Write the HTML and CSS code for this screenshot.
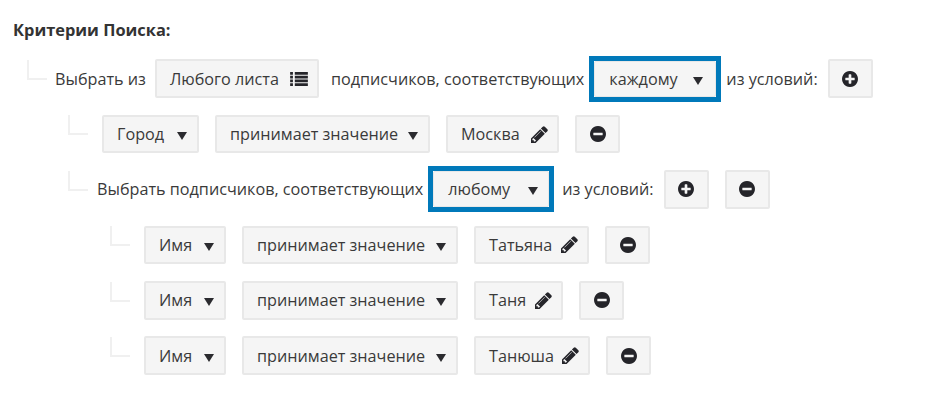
FILE: index.html
```html
<!DOCTYPE html>
<html lang="ru">
<head>
<meta charset="utf-8">
<title>Критерии Поиска</title>
<link rel="stylesheet" href="styles.css">
</head>
<body>
<svg class="defs" xmlns="http://www.w3.org/2000/svg">
  <symbol id="i-plus" viewBox="0 0 1536 1536"><path transform="translate(0 -128)" d="M1216 960v-128q0-26-19-45t-45-19h-256v-256q0-26-19-45t-45-19h-128q-26 0-45 19t-19 45v256h-256q-26 0-45 19t-19 45v128q0 26 19 45t45 19h256v256q0 26 19 45t45 19h128q26 0 45-19t19-45v-256h256q26 0 45-19t19-45zm320-64q0 209-103 385.5t-279.5 279.5-385.5 103-385.5-103-279.5-279.5-103-385.5 103-385.5 279.5-279.5 385.5-103 385.5 103 279.5 279.5 103 385.5z"/></symbol>
  <symbol id="i-minus" viewBox="0 0 1536 1536"><path transform="translate(0 -128)" d="M1216 960v-128q0-26-19-45t-45-19h-768q-26 0-45 19t-19 45v128q0 26 19 45t45 19h768q26 0 45-19t19-45zm320-64q0 209-103 385.5t-279.5 279.5-385.5 103-385.5-103-279.5-279.5-103-385.5 103-385.5 279.5-279.5 385.5-103 385.5 103 279.5 279.5 103 385.5z"/></symbol>
  <symbol id="i-pencil" viewBox="128 128 1536 1536"><path d="M491 1536l91-91-235-235-91 91v107h128v128h107zm523-928q0-22-22-22-10 0-17 7l-542 542q-7 7-7 17 0 22 22 22 10 0 17-7l542-542q7-7 7-17zm-54-192l416 416-832 832h-416v-416zm683 96q0 53-37 90l-166 166-416-416 166-165q36-38 90-38 53 0 91 38l235 234q37 39 37 91z"/></symbol>
  <symbol id="i-list" viewBox="0 0 19 15"><path d="M0 0h3v3H0zM5 0h14v3H5zM0 4h3v3H0zM5 4h14v3H5zM0 8h3v3H0zM5 8h14v3H5zM0 12h3v3H0zM5 12h14v3H5z"/></symbol>
</svg>

<main class="criteria">
  <h2 class="title">Критерии Поиска:</h2>

  <div class="row">
    <span class="elbow"></span>
    <span class="label">Выбрать из</span>
    <button class="btn btn-list">Любого листа <svg class="ico ico-list"><use href="#i-list"/></svg></button>
    <span class="label label-wide">подписчиков, соответствующих</span>
    <span class="hl"><button class="btn btn-each">каждому <i class="caret"></i></button></span>
    <span class="label label-tail">из условий:</span>
    <button class="btn btn-icon"><svg class="ico"><use href="#i-plus"/></svg></button>
  </div>

  <div class="group">
    <div class="row">
      <span class="elbow"></span>
      <button class="btn first btn-city">Город <i class="caret"></i></button>
      <button class="btn btn-op">принимает значение <i class="caret"></i></button>
      <button class="btn val val-moscow">Москва <svg class="ico ico-pen"><use href="#i-pencil"/></svg></button>
      <button class="btn btn-icon"><svg class="ico"><use href="#i-minus"/></svg></button>
    </div>

    <div class="row">
      <span class="elbow"></span>
      <span class="label label-nested">Выбрать подписчиков, соответствующих</span>
      <span class="hl"><button class="btn btn-any">любому <i class="caret"></i></button></span>
      <span class="label label-tail label-tail-any">из условий:</span>
      <button class="btn btn-icon"><svg class="ico"><use href="#i-plus"/></svg></button>
      <button class="btn btn-icon"><svg class="ico"><use href="#i-minus"/></svg></button>
    </div>

    <div class="group group-inner">
      <div class="row">
        <span class="elbow"></span>
        <button class="btn first btn-name">Имя <i class="caret"></i></button>
        <button class="btn btn-op">принимает значение <i class="caret"></i></button>
        <button class="btn val val-tatyana">Татьяна <svg class="ico ico-pen"><use href="#i-pencil"/></svg></button>
        <button class="btn btn-icon"><svg class="ico"><use href="#i-minus"/></svg></button>
      </div>
      <div class="row">
        <span class="elbow"></span>
        <button class="btn first btn-name">Имя <i class="caret"></i></button>
        <button class="btn btn-op">принимает значение <i class="caret"></i></button>
        <button class="btn val val-tanya">Таня <svg class="ico ico-pen"><use href="#i-pencil"/></svg></button>
        <button class="btn btn-icon"><svg class="ico"><use href="#i-minus"/></svg></button>
      </div>
      <div class="row">
        <span class="elbow"></span>
        <button class="btn first btn-name">Имя <i class="caret"></i></button>
        <button class="btn btn-op">принимает значение <i class="caret"></i></button>
        <button class="btn val val-tanyusha">Танюша <svg class="ico ico-pen"><use href="#i-pencil"/></svg></button>
        <button class="btn btn-icon"><svg class="ico"><use href="#i-minus"/></svg></button>
      </div>
    </div>
  </div>
</main>
</body>
</html>
```

FILE: styles.css
```css
* { box-sizing: border-box; }
html, body { margin: 0; padding: 0; background: #fff; }
body {
  width: 932px;
  height: 405px;
  overflow: hidden;
  font-family: "Open Sans", sans-serif;
  font-size: 16.2px;
  color: #3a3a3a;
}
.defs { display: none; }
.criteria { padding: 19px 0 0 13px; }
.title {
  margin: 0 0 18px;
  font-size: 16.4px;
  font-weight: 700;
  line-height: 22px;
  color: #333;
}
.group { padding-left: 41px; }
.group-inner { padding-left: 42px; }
.row {
  display: flex;
  align-items: center;
  height: 39.4px;
  margin-left: 14px;
  margin-bottom: 16px;
}
.elbow {
  flex: none;
  width: 20px;
  height: 20px;
  margin: 1px 8px 0 0;
  align-self: flex-start;
  border-left: 2px solid #f0f0f0;
  border-bottom: 2px solid #f0f0f0;
}
.label { white-space: nowrap; line-height: 22px; }
.label-wide { margin-left: 12px; }
.label-nested { margin-left: 1px; }
.label-tail { margin-left: 5px; }
.label-tail-any { margin-left: 8px; }
.btn {
  display: inline-flex;
  flex: none;
  align-items: center;
  height: 38.6px;
  margin: 0 0 0 16px;
  padding: 0 10px 0 13px;
  background: #f5f5f5;
  border: 2px solid #e8e8e8;
  border-radius: 2px;
  font: inherit;
  color: #3a3a3a;
  white-space: nowrap;
}
.first { margin-left: 6px; }
.label + .btn { margin-left: 10px; }
.label + .btn-list { margin-left: 9px; }
.btn-city { width: 97px; justify-content: space-between; }
.btn-name { width: 82px; justify-content: space-between; }
.btn-op { width: 215px; justify-content: space-between; }
.group-inner .btn-op { width: 216px; }
.val { justify-content: space-between; }
.val-moscow { width: 113px; }
.val-tatyana { width: 115px; }
.val-tanya { width: 89px; }
.val-tanyusha { width: 116px; }
.hl {
  display: inline-flex;
  flex: none;
  margin-left: 5px;
  border: 5px solid #0079ba;
  height: 46px;
}
.hl .btn { margin: 0; height: 36px; border-width: 1px; padding-left: 14px; justify-content: space-between; }
.btn-each { width: 122px; padding-right: 12px; }
.btn-any { width: 116px; }
.btn-icon {
  width: 45px;
  padding: 0;
  justify-content: center;
}
.ico {
  width: 16px;
  height: 16px;
  fill: #25252a;
  flex: none;
}
.ico-list { width: 18px; height: 14px; margin: 0 -1px 0 11px; }
.ico-pen { width: 17px; height: 17px; margin: 0 -1px 0 0; }
.caret {
  flex: none;
  width: 0;
  height: 0;
  margin-top: 4px;
  border-left: 5px solid transparent;
  border-right: 5px solid transparent;
  border-top: 8px solid #2b2b2f;
}
```
